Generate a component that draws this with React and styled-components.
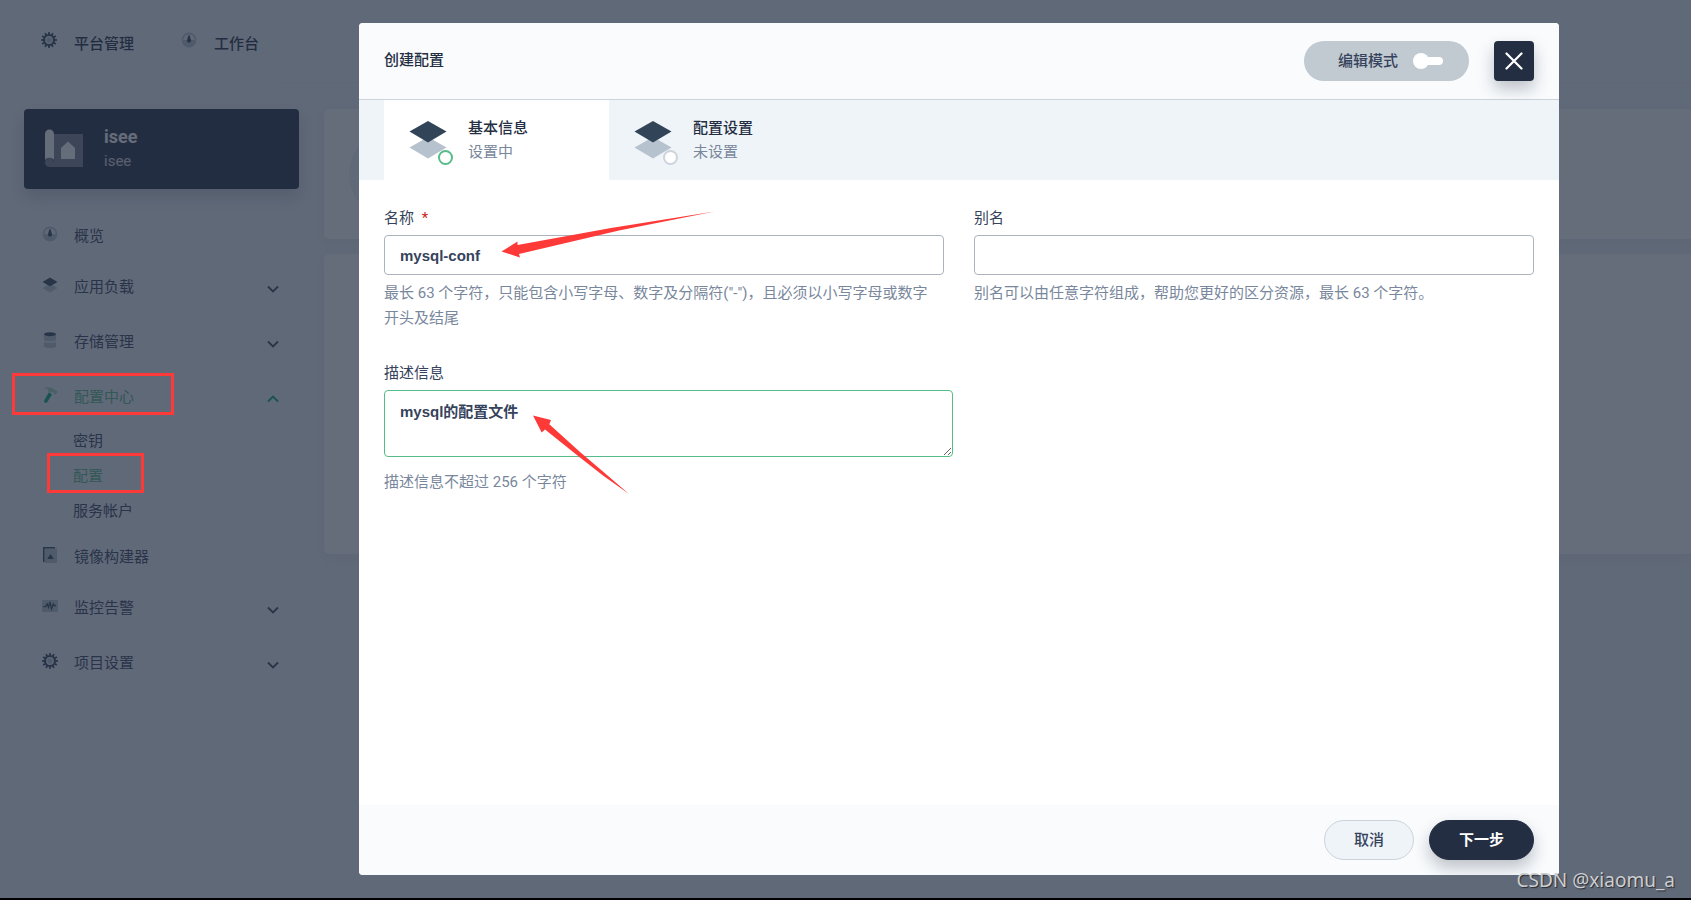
import { useState } from 'react';
import styled, { createGlobalStyle, css } from 'styled-components';

const menu = [
  { label: '概览', icon: GaugeIcon },
  { label: '应用负载', icon: LayersIcon, expandable: true },
  { label: '存储管理', icon: DatabaseIcon, expandable: true },
  {
    label: '配置中心',
    icon: HammerIcon,
    expandable: true,
    active: true,
    marked: true,
    children: [
      { label: '密钥' },
      { label: '配置', active: true, marked: true },
      { label: '服务帐户' },
    ],
  },
  { label: '镜像构建器', icon: ImageIcon },
  { label: '监控告警', icon: MonitorIcon, expandable: true },
  { label: '项目设置', icon: GearIcon, expandable: true },
];

const steps = [
  { title: '基本信息', state: '设置中', current: true },
  { title: '配置设置', state: '未设置', current: false },
];

function App() {
  return (
    <>
      <GlobalStyle />
      <Page>
        <TopNav>
          <TopLink href="#platform">
            <GearIcon />
            平台管理
          </TopLink>
          <TopLink href="#workbench">
            <GaugeIcon />
            工作台
          </TopLink>
        </TopNav>
        <Body>
          <Sidebar>
            <ProjectCard>
              <BlueprintIcon />
              <div>
                <ProjectName>isee</ProjectName>
                <ProjectAlias>isee</ProjectAlias>
              </div>
            </ProjectCard>
            <SideMenu />
          </Sidebar>
          <Main>
            <Panel $height={130}>
              <PanelAvatar />
            </Panel>
            <Panel $height={300} />
          </Main>
        </Body>
      </Page>
      <Mask>
        <CreateModal />
      </Mask>
      <BottomLine />
      <Watermark>CSDN @xiaomu_a</Watermark>
    </>
  );
}

function SideMenu() {
  return (
    <nav>
      <MenuList>
        {menu.map(({ label, icon: Icon, expandable, active, marked, children }) => (
          <li key={label}>
            <MenuLink href="#menu" $expandable={expandable} $active={active}>
              <Icon />
              <span>{label}</span>
              {expandable && <Chevron up={active} />}
              {marked && <MenuMark />}
            </MenuLink>
            {children && (
              <SubList>
                {children.map(item => (
                  <li key={item.label}>
                    <SubLink href="#menu" $active={item.active}>
                      {item.label}
                      {item.marked && <SubMark />}
                    </SubLink>
                  </li>
                ))}
              </SubList>
            )}
          </li>
        ))}
      </MenuList>
    </nav>
  );
}

function CreateModal() {
  const [name, setName] = useState('mysql-conf');
  const [alias, setAlias] = useState('');
  const [description, setDescription] = useState('mysql的配置文件');

  return (
    <Modal role="dialog" aria-labelledby="modal-title">
      <ModalHeader>
        <ModalTitle id="modal-title">创建配置</ModalTitle>
        <EditMode>
          编辑模式
          <Toggle type="checkbox" />
        </EditMode>
        <CloseButton type="button" aria-label="关闭">
          <svg width="18" height="18" viewBox="0 0 18 18">
            <path d="M1.5 1.5l15 15M16.5 1.5l-15 15" stroke="#fff" strokeWidth="2.2" strokeLinecap="round" />
          </svg>
        </CloseButton>
      </ModalHeader>
      <Steps>
        {steps.map(step => (
          <Step type="button" key={step.title} $current={step.current}>
            <StepIcon current={step.current} />
            <span>
              <StepTitle>{step.title}</StepTitle>
              <StepState>{step.state}</StepState>
            </span>
          </Step>
        ))}
      </Steps>
      <Form id="config-form">
        <Field>
          <Label htmlFor="name">
            名称 <Required>*</Required>
          </Label>
          <TextInput id="name" value={name} onChange={e => setName(e.target.value)} />
          <Hint>最长 63 个字符，只能包含小写字母、数字及分隔符("-")，且必须以小写字母或数字开头及结尾</Hint>
          <NameArrow width="214" height="48" viewBox="0 0 214 48" aria-hidden="true">
            <path d="M0.5 40.5L16.5 30.5V34L110 17L213.5 0.5L118 19.500L18 43L19 46.5z" fill="#fd3a38" />
          </NameArrow>
        </Field>
        <Field>
          <Label htmlFor="alias">别名</Label>
          <TextInput id="alias" value={alias} onChange={e => setAlias(e.target.value)} />
          <Hint>别名可以由任意字符组成，帮助您更好的区分资源，最长 63 个字符。</Hint>
        </Field>
        <WideField>
          <Label htmlFor="description">描述信息</Label>
          <TextArea
            id="description"
            value={description}
            onChange={e => setDescription(e.target.value)}
          />
          <Hint>描述信息不超过 256 个字符</Hint>
          <DescriptionArrow width="97" height="80" viewBox="0 0 97 80" aria-hidden="true">
            <path d="M0 0.5L18 5L16.3 9.3L47 37L74 60L96 79L70 60.500L47 42.500L12 14.500L8.700 17.5z" fill="#fd3a38" />
          </DescriptionArrow>
        </WideField>
      </Form>
      <ModalFooter>
        <CancelButton type="button">取消</CancelButton>
        <NextButton type="submit" form="config-form">
          下一步
        </NextButton>
      </ModalFooter>
    </Modal>
  );
}

function GearIcon() {
  const teeth = Array.from({ length: 12 }, (_, i) => i * 30);
  return (
    <IconSvg viewBox="0 0 16 16">
      {teeth.map(deg => (
        <rect key={deg} x="7.1" y="0.1" width="1.8" height="3" fill="#324558" transform={`rotate(${deg} 8 8)`} />
      ))}
      <circle cx="8" cy="8" r="5" fill="none" stroke="#324558" strokeWidth="2.2" />
      <circle cx="8" cy="8" r="2.7" fill="#b6c2cd" />
    </IconSvg>
  );
}

function GaugeIcon() {
  return (
    <IconSvg viewBox="0 0 16 16">
      <circle cx="8" cy="8" r="7.4" fill="#b6c2cd" />
      <path d="M2.2 8a5.8 5.8 0 0 1 11.6 0z" fill="#eff4f9" />
      <path d="M7.4 3.2h1.2l1.5 5.4a2.1 2.1 0 1 1-4.2 0z" fill="#324558" />
    </IconSvg>
  );
}

function LayersIcon() {
  return (
    <IconSvg viewBox="0 0 16 16">
      <path d="M8 6.6L15.5 11 8 15.4 0.5 11z" fill="#b6c2cd" />
      <path d="M8 0.6L15.5 4.9 8 9.2 0.5 4.9z" fill="#324558" />
    </IconSvg>
  );
}

function DatabaseIcon() {
  return (
    <IconSvg viewBox="0 0 16 16">
      <path d="M2 3v5.2c1.5 1.6 10.5 1.6 12 0V3z" fill="#b6c2cd" />
      <path d="M2 9.7c2 1.5 10 1.5 12 0v5c-1.5 1.7-10.5 1.7-12 0z" fill="#b6c2cd" />
      <ellipse cx="8" cy="2.2" rx="6" ry="2" fill="#324558" />
    </IconSvg>
  );
}

function HammerIcon() {
  return (
    <IconSvg viewBox="0 0 16 16">
      <path d="M6.8 5.5l3.200 1.900-5 8c-.9 1.200-3.500-.1-2.800-1.800z" fill="#00aa72" />
      <path d="M1.8 1.2C5.5-.3 9 .2 12 2.3l.9.9 1.2-.2 1.5 2-2.3 2.700-1.500-.9-.2-1.300-1.400-.7-1.200 1.500-3-1.800.6-1.800C5.400 1.900 3.600 1.500 1.800 1.200z" fill="#a2d8bb" />
    </IconSvg>
  );
}

function ImageIcon() {
  return (
    <IconSvg viewBox="0 0 16 16">
      <path d="M2.5 1.5H15V16H2.500z" fill="#b6c2cd" />
      <path d="M1 0h12v1.5H2.5V15H1z" fill="#324558" />
      <path d="M8.500 7l3.300 5H5.200z" fill="#324558" />
    </IconSvg>
  );
}

function MonitorIcon() {
  return (
    <IconSvg viewBox="0 0 16 16">
      <rect x="0" y="2" width="16" height="12" rx="1" fill="#b6c2cd" />
      <path d="M1.5 8.7h2l1.700-2.700 1.300 3.500 1.500-5.500 1.500 7 1.800-5 1 1.700h1.800" fill="none" stroke="#324558" strokeWidth="1.3" />
    </IconSvg>
  );
}

function BlueprintIcon() {
  return (
    <svg width="40" height="40" viewBox="0 0 40 40" aria-hidden="true">
      <path d="M10 5h29v33H5.500a4.500 4.500 0 1 1 4.500-4.500z" fill="#fff" opacity="0.4" />
      <path d="M1 5a4.500 4.500 0 0 1 9 0v26c-2-3-7-3-9 0z" fill="#fff" />
      <path d="M24 12.500l7 6.500v11H17V19z" fill="#fff" />
    </svg>
  );
}

function StepIcon({ current }) {
  return (
    <svg width="46" height="46" viewBox="0 0 46 46" aria-hidden="true">
      <path d="M20 17l18.500 10.500L20 38.500 1.500 27.500z" fill="#b6c2cd" />
      <path d="M20 1l18.500 10.500L20 22.500 1.500 11.500z" fill="#324558" />
      <circle cx="37.500" cy="37.500" r="6.500" fill="#fff" stroke={current ? '#55bc8a' : '#ccd3db'} strokeWidth="2" />
    </svg>
  );
}

function Chevron({ up }) {
  return (
    <ChevronSvg viewBox="0 0 12 8" aria-hidden="true">
      <path
        d={up ? 'M1 6.5L6 1.5l5 5' : 'M1 1.5l5 5 5-5'}
        fill="none"
        stroke={up ? '#00aa72' : '#324558'}
        strokeWidth="1.8"
      />
    </ChevronSvg>
  );
}

const GlobalStyle = createGlobalStyle`
  *, *::before, *::after {
    box-sizing: border-box;
  }
  body {
    margin: 0;
    background: #eff4f9;
    color: #242e42;
  }
  body, button, input, textarea {
    font-family: Roboto, 'Noto Sans CJK SC', sans-serif;
    font-size: 15px;
    line-height: 24px;
  }
  a {
    color: inherit;
    text-decoration: none;
  }
  ul, h2, p {
    margin: 0;
    padding: 0;
    list-style: none;
  }
`;

const Page = styled.div`
  min-height: 100vh;
`;

const IconSvg = styled.svg.attrs({ 'aria-hidden': true })`
  flex: none;
  width: 16px;
  height: 16px;
  margin-bottom: 4px;
`;

const TopNav = styled.header`
  display: flex;
  align-items: center;
  gap: 47px;
  height: 83px;
  padding: 6px 41px 0;
  border-bottom: 1px solid;
  border-image: linear-gradient(to right, transparent 240px, #e6ecf3 320px) 1;
`;

const TopLink = styled.a`
  display: flex;
  align-items: center;
  gap: 17px;
  font-weight: 500;

  ${IconSvg} {
    margin-bottom: 8px;
  }
`;

const Body = styled.div`
  display: flex;
  gap: 25px;
  padding: 26px 0 0 24px;
`;

const Sidebar = styled.aside`
  flex: 0 0 275px;
`;

const ProjectCard = styled.div`
  display: flex;
  align-items: center;
  gap: 20px;
  height: 80px;
  margin-bottom: 24px;
  padding: 0 20px;
  border-radius: 4px;
  background: #242e42;
  color: #fff;
  box-shadow: 0 8px 16px rgba(36, 46, 66, 0.2);
`;

const ProjectName = styled.p`
  font-size: 18px;
  font-weight: 700;
`;

const ProjectAlias = styled.p`
  line-height: 25px;
  opacity: 0.8;
`;

const MenuList = styled.ul`
  color: #36435c;
`;

const MenuLink = styled.a`
  position: relative;
  display: flex;
  align-items: center;
  gap: 16px;
  height: ${({ $expandable }) => ($expandable ? 55 : 46)}px;
  padding: 0 20px 0 18px;
  color: ${({ $active }) => ($active ? '#55bc8a' : 'inherit')};
`;

const SubList = styled.ul`
  padding: 0 0 5px 49px;
`;

const SubLink = styled.a`
  position: relative;
  display: block;
  line-height: 35px;
  color: ${({ $active }) => ($active ? '#55bc8a' : 'inherit')};
`;

const mark = css`
  position: absolute;
  z-index: 2;
  border: 3px solid #fd3a38;
`;

const MenuMark = styled.i`
  ${mark}
  top: 4px;
  left: -12px;
  width: 162px;
  height: 42px;
`;

const SubMark = styled.i`
  ${mark}
  top: -6px;
  left: -26px;
  width: 97px;
  height: 40px;
`;

const ChevronSvg = styled.svg`
  width: 12px;
  height: 8px;
  margin: 4px 0 0 auto;
`;

const Main = styled.main`
  flex: 1;
`;

const Panel = styled.section`
  height: ${({ $height }) => $height}px;
  margin-bottom: 15px;
  padding: 20px 25px;
  border-radius: 5px 0 0 5px;
  background: #fff;
  box-shadow: 0 4px 16px rgba(36, 46, 66, 0.05);
`;

const PanelAvatar = styled.div`
  width: 90px;
  height: 90px;
  border-radius: 50%;
  background: #eff4f9;
`;

const Mask = styled.div`
  position: absolute;
  z-index: 1;
  inset: 0;
  display: flex;
  padding: 23px 132px 25px 359px;
  background: rgba(36, 46, 66, 0.7);
`;

const Modal = styled.div`
  flex: 1;
  display: flex;
  flex-direction: column;
  overflow: hidden;
  border-radius: 4px;
  background: #fff;
`;

const ModalHeader = styled.header`
  display: flex;
  align-items: center;
  gap: 25px;
  padding: 18px 25px;
  border-bottom: 1px solid #ccd3db;
  background: #f9fbfd;
`;

const ModalTitle = styled.h2`
  flex: 1;
  padding-bottom: 2px;
  font-size: 15px;
  font-weight: 500;
`;

const EditMode = styled.label`
  display: flex;
  align-items: center;
  justify-content: center;
  gap: 15px;
  width: 165px;
  height: 40px;
  padding-left: 8px;
  border-radius: 20px;
  background: #c1c9d1;
  color: #36435c;
  font-weight: 500;
`;

const Toggle = styled.input`
  appearance: none;
  display: flex;
  align-items: center;
  width: 30px;
  height: 16px;
  margin: 0;

  &::before {
    content: '';
    width: 16px;
    height: 16px;
    border-radius: 50%;
    background: #fff;
  }
  &::after {
    content: '';
    flex: 1;
    height: 8px;
    margin-left: -2px;
    border-radius: 0 4px 4px 0;
    background: #fff;
  }
`;

const CloseButton = styled.button`
  display: flex;
  align-items: center;
  justify-content: center;
  width: 40px;
  height: 40px;
  padding: 0;
  border: none;
  border-radius: 4px;
  background: #242e42;
  box-shadow: 0 8px 16px rgba(36, 46, 66, 0.28);
`;

const Steps = styled.div`
  display: flex;
  height: 80px;
  padding-left: 25px;
  background: #eff4f8;
`;

const Step = styled.button`
  display: flex;
  align-items: center;
  gap: 14px;
  width: 225px;
  padding: 0 0 0 24px;
  border: none;
  background: ${({ $current }) => ($current ? '#fff' : 'transparent')};
  color: #242e42;
  text-align: left;

  svg {
    margin-top: 6px;
  }
`;

const StepTitle = styled.span`
  display: block;
  font-weight: 500;
`;

const StepState = styled.span`
  display: block;
  color: #79879c;
  line-height: 25px;
`;

const Form = styled.form`
  flex: 1;
  display: grid;
  grid-template-columns: 1fr 1fr;
  align-content: start;
  gap: 30px;
  padding: 26px 25px;
`;

const Field = styled.div`
  position: relative;
  min-width: 0;
`;

const WideField = styled(Field)`
  grid-column: 1 / -1;
`;

const Label = styled.label`
  display: block;
  margin-bottom: 5px;
  color: #36435c;
`;

const Required = styled.span`
  margin-left: 4px;
  color: #ca2621;
`;

const control = css`
  display: block;
  border: 1px solid #abb4be;
  border-radius: 4px;
  background: #fff;
  color: #36435c;
  font-family: 'Liberation Sans', 'Noto Sans CJK SC', sans-serif;
  font-weight: 700;
  outline: none;
`;

const TextInput = styled.input`
  ${control}
  width: 100%;
  height: 40px;
  padding: 0 15px;
`;

const TextArea = styled.textarea`
  ${control}
  width: calc(50% - 6px);
  height: 67px;
  margin-bottom: 13px;
  padding: 9px 15px;
  border-color: #55bc8a;
`;

const Hint = styled.p`
  margin-top: 6px;
  padding-right: 10px;
  color: #79879c;
  line-height: 25px;
`;

const NameArrow = styled.svg`
  position: absolute;
  top: 5px;
  left: 117px;
`;

const DescriptionArrow = styled.svg`
  position: absolute;
  top: 54px;
  left: 149px;
`;

const ModalFooter = styled.footer`
  display: flex;
  justify-content: flex-end;
  gap: 15px;
  padding: 15px 25px;
  background: #f9fbfd;
`;

const FooterButton = styled.button`
  height: 40px;
  padding: 0 29px;
  border: 1px solid #ccd3db;
  border-radius: 20px;
  background: #eff4f9;
  color: #36435c;
  font-weight: 500;
`;

const CancelButton = styled(FooterButton)``;

const NextButton = styled(FooterButton)`
  border-color: #242e42;
  background: #242e42;
  color: #fff;
  font-weight: 700;
  box-shadow: 0 8px 16px rgba(36, 46, 66, 0.28);
`;

const BottomLine = styled.div`
  position: absolute;
  z-index: 2;
  right: 0;
  bottom: 0;
  left: 0;
  height: 2px;
  background: #000;
`;

const Watermark = styled.span`
  position: absolute;
  z-index: 2;
  right: 16px;
  bottom: 8px;
  color: #ccced2;
  font-family: 'Noto Sans', sans-serif;
  font-size: 19px;
  text-shadow: 1px 1px 1px rgba(0, 0, 0, 0.6);
`;

export default App;
